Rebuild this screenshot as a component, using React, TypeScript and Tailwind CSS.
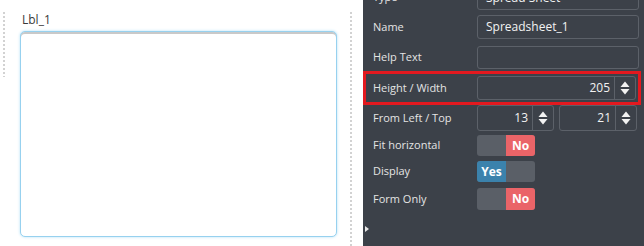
import React from "react";

const font = { fontFamily: '"Open Sans", "Liberation Sans", sans-serif' };

function Spinner() {
  return (
    <div className="flex h-full w-[21px] items-center justify-center border-l border-[#5c6169]">
      <svg width="10" height="14" viewBox="0 0 10 14">
        <path d="M5 0.5 L9.5 6 L0.5 6 Z" fill="#f2f2f2" />
        <path d="M5 13.5 L9.5 8 L0.5 8 Z" fill="#f2f2f2" />
      </svg>
    </div>
  );
}

function TextBox({ value, w = "w-[162px]" }: { value?: string; w?: string }) {
  return (
    <div className={`${w} h-full rounded-[3px] border border-[#5c6169] px-[8px] flex items-center text-[12px] text-[#f2f2f2]`}>
      {value}
    </div>
  );
}

function NumBox({ value, w }: { value: string; w: string }) {
  return (
    <div className={`${w} h-full rounded-[3px] border border-[#5c6169] flex items-center text-[12px] text-[#f2f2f2]`}>
      <div className="flex-1 text-right pr-[4px]">{value}</div>
      <Spinner />
    </div>
  );
}

function Toggle({ on }: { on: boolean }) {
  return (
    <div className="flex h-full w-[58px] overflow-hidden rounded-[3px] bg-[#5a5f67] text-[12px] font-bold text-white">
      {on ? (
        <>
          <div className="flex w-[29px] items-center justify-center bg-[#3b82ac]">Yes</div>
          <div className="flex-1" />
        </>
      ) : (
        <>
          <div className="w-[29px]" />
          <div className="flex flex-1 items-center justify-center bg-[#ea6468]">No</div>
        </>
      )}
    </div>
  );
}

function Row({ label, h, mt, children }: { label: string; h: string; mt: string; children?: React.ReactNode }) {
  return (
    <div className={`flex items-center ${h} ${mt}`}>
      <div className="w-[114px] pl-[10px] text-[11px] text-[#e4e4e4]">{label}</div>
      <div className="flex h-full gap-[5px]">{children}</div>
    </div>
  );
}

export default function App() {
  return (
    <div className="flex h-[246px] w-[644px] overflow-hidden bg-white" style={font}>
      <div className="pl-[3px] pt-[12px]">
        <div className="h-[65px] w-[2px] bg-[repeating-linear-gradient(to_bottom,#d2d2d2_0_2px,transparent_2px_4px)]" />
      </div>
      <div className="ml-[15px] w-[317px] pt-[12px]">
        <div className="h-[16px] pl-[2px] text-[12px] leading-[16px] text-[#3a3a3a]">Lbl_1</div>
        <div className="mt-[3px] h-[206px] rounded-[5px] border border-[#97d1ef] bg-white shadow-[inset_0_2px_0_#c9c9c9,0_0_3px_#b3e1f7]" />
      </div>
      <div className="ml-[13px] pt-[12px]">
        <div className="h-full w-[2px] bg-[repeating-linear-gradient(to_bottom,#d2d2d2_0_2px,transparent_2px_4px)]" />
      </div>
      <div className="ml-[11px] flex flex-1 flex-col bg-[#3c4149]">
        <Row label="Type" h="h-[25px]" mt="-mt-[15px]">
          <TextBox value="Spread Sheet" />
        </Row>
        <Row label="Name" h="h-[24px]" mt="mt-[5px]">
          <TextBox value="Spreadsheet_1" />
        </Row>
        <Row label="Help Text" h="h-[23px]" mt="mt-[7px]">
          <TextBox />
        </Row>
        <div className="mt-[2px] mr-[3px] flex h-[34px] items-center border-[3px] border-[#e3191f]">
          <div className="w-[111px] pl-[7px] text-[11px] text-[#e4e4e4]">Height / Width</div>
          <div className="flex h-[24px]">
            <NumBox value="205" w="w-[159px]" />
          </div>
        </div>
        <Row label="From Left / Top" h="h-[26px]" mt="mt-0">
          <NumBox value="13" w="w-[77px]" />
          <NumBox value="21" w="w-[78px]" />
        </Row>
        <Row label="Fit horizontal" h="h-[21px]" mt="mt-[4px]">
          <Toggle on={false} />
        </Row>
        <Row label="Display" h="h-[21px]" mt="mt-[5px]">
          <Toggle on={true} />
        </Row>
        <Row label="Form Only" h="h-[22px]" mt="mt-[6px]">
          <Toggle on={false} />
        </Row>
        <div className="mt-[16px] pl-[2px]">
          <svg width="5" height="6" viewBox="0 0 5 6">
            <path d="M0 0 L4 3 L0 6 Z" fill="#e8e8e8" />
          </svg>
        </div>
      </div>
    </div>
  );
}
